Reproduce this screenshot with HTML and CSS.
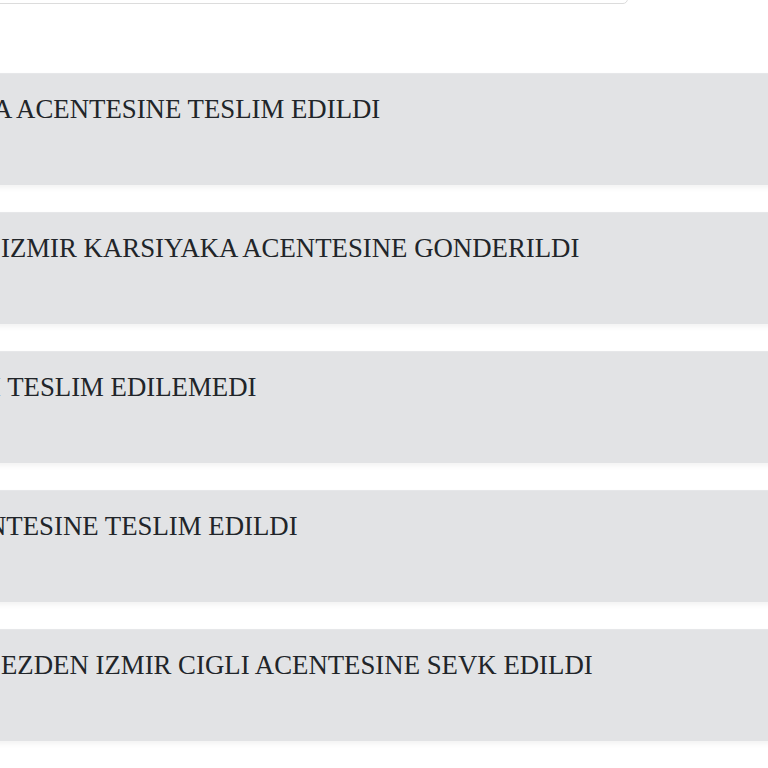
FILE: index.html
```html
<!DOCTYPE html>
<html lang="tr">
<head>
<meta charset="utf-8">
<link rel="stylesheet" href="styles.css">
</head>
<body>
<div class="page">
  <div class="search"></div>
  <ul class="events">
    <li class="event"><p class="status s1">A ACENTESINE TESLIM EDILDI</p></li>
    <li class="event"><p class="status s2">IZMIR KARSIYAKA ACENTESINE GONDERILDI</p></li>
    <li class="event"><p class="status s3">I TESLIM EDILEMEDI</p></li>
    <li class="event"><p class="status s4">NTESINE TESLIM EDILDI</p></li>
    <li class="event"><p class="status s5">EZDEN IZMIR CIGLI ACENTESINE SEVK EDILDI</p></li>
  </ul>
</div>
</body>
</html>
```
FILE: styles.css
```css
html, body {
  margin: 0;
  padding: 0;
  background: #fff;
  overflow: hidden;
}
.page {
  width: 768px;
  height: 768px;
  overflow: hidden;
  font-family: "Liberation Serif", "Times New Roman", serif;
  color: #212529;
}
.search {
  margin-top: -40px;
  margin-left: -20px;
  width: 648px;
  height: 44px;
  box-sizing: border-box;
  border: 1px solid #dcdcdc;
  border-radius: 5px;
  background: #fff;
}
.events {
  list-style: none;
  margin: 69px 0 0 -20px;
  padding: 0;
  width: 820px;
  display: flex;
  flex-direction: column;
  gap: 27px;
}
.event {
  height: 112px;
  box-sizing: border-box;
  background: #e2e3e5;
  border-top: 1px solid #e6e7e9;
  box-shadow: 0 3px 5px rgba(0, 0, 0, 0.05);
  padding: 19px 0 0 20px;
}
.status {
  margin: 0;
  font-size: 26.8px;
  line-height: 32px;
  white-space: nowrap;
}
.s1 { margin-left: -7px; }
.s2 { margin-left: 1px; }
.s3 { margin-left: -8px; }
.s4 { margin-left: -13px; }
.s5 { margin-left: 1px; }
```
